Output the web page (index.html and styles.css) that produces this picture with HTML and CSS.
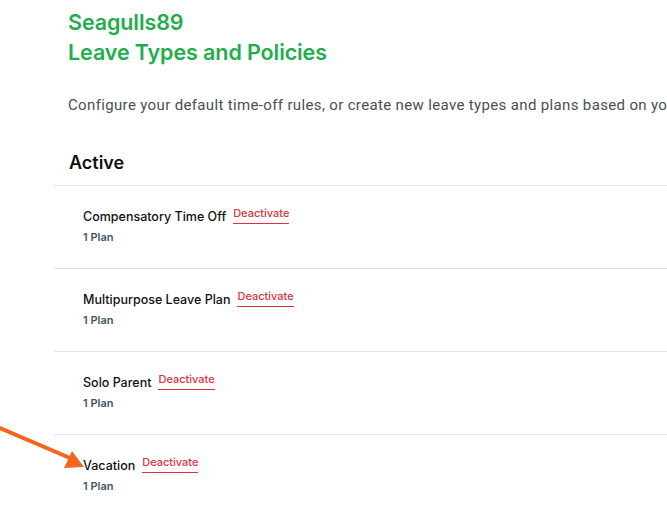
FILE: index.html
```html
<!DOCTYPE html>
<html>
<head>
<meta charset="utf-8">
<link rel="stylesheet" href="styles.css">
</head>
<body>
<div class="page">
  <header class="head">
    <h1 class="title">Seagulls89<br>Leave Types and Policies</h1>
    <p class="desc">Configure your default time-off rules, or create new leave types and plans based on your</p>
  </header>
  <h2 class="section">Active</h2>
  <ul class="list">
    <li class="row">
      <div class="row-top"><span class="name">Compensatory Time Off</span><a class="deact">Deactivate</a></div>
      <div class="plans">1 Plan</div>
    </li>
    <li class="row">
      <div class="row-top"><span class="name">Multipurpose Leave Plan</span><a class="deact">Deactivate</a></div>
      <div class="plans">1 Plan</div>
    </li>
    <li class="row">
      <div class="row-top"><span class="name">Solo Parent</span><a class="deact">Deactivate</a></div>
      <div class="plans">1 Plan</div>
    </li>
    <li class="row">
      <div class="row-top"><span class="name">Vacation</span><a class="deact">Deactivate</a></div>
      <div class="plans">1 Plan</div>
    </li>
  </ul>
  <svg class="arrow" width="100" height="60" viewBox="0 0 100 60">
    <line x1="0" y1="8" x2="70" y2="38" stroke="#f4661b" stroke-width="4" stroke-linecap="round"/>
    <polygon points="72,31 84,47 64,48" fill="#f4661b"/>
  </svg>
</div>
</body>
</html>
```
FILE: styles.css
```css
html, body {
  margin: 0;
  padding: 0;
  background: #fff;
  overflow: hidden;
}
.page {
  position: relative;
  width: 667px;
  height: 516px;
  font-family: "Inter", "Roboto", sans-serif;
  overflow: hidden;
}
.head {
  padding: 7px 0 0 68px;
}
.title {
  margin: 0;
  font-size: 21.5px;
  line-height: 30px;
  font-weight: 600;
  color: #1fae4b;
  letter-spacing: -0.1px;
}
.desc {
  margin: 28px 0 0 0;
  font-family: "Roboto", sans-serif;
  font-size: 15px;
  line-height: 20px;
  letter-spacing: 0.35px;
  color: #4a4f55;
  white-space: nowrap;
}
.section {
  margin: 36px 0 0 69px;
  font-size: 18px;
  line-height: 24px;
  font-weight: 600;
  color: #111;
}
.list {
  list-style: none;
  margin: 10px 0 0 54px;
  padding: 0;
}
.row {
  border-top: 1px solid #e2e2e2;
  height: 83px;
  padding: 19px 0 0 29px;
  box-sizing: border-box;
}
.row-top {
  display: flex;
  align-items: flex-start;
  gap: 7px;
}
.name {
  font-size: 12.5px;
  line-height: 20px;
  font-weight: 500;
  color: #111;
  padding-top: 2px;
}
.deact {
  font-size: 11px;
  line-height: 16px;
  font-weight: 500;
  color: #e0303f;
  border-bottom: 1.5px solid #e0303f;
  padding-bottom: 2px;
}
.plans {
  margin-top: 3px;
  font-size: 11px;
  line-height: 14px;
  font-weight: 600;
  color: #3d5664;
}
.arrow {
  position: absolute;
  left: 0;
  top: 420px;
}
```
